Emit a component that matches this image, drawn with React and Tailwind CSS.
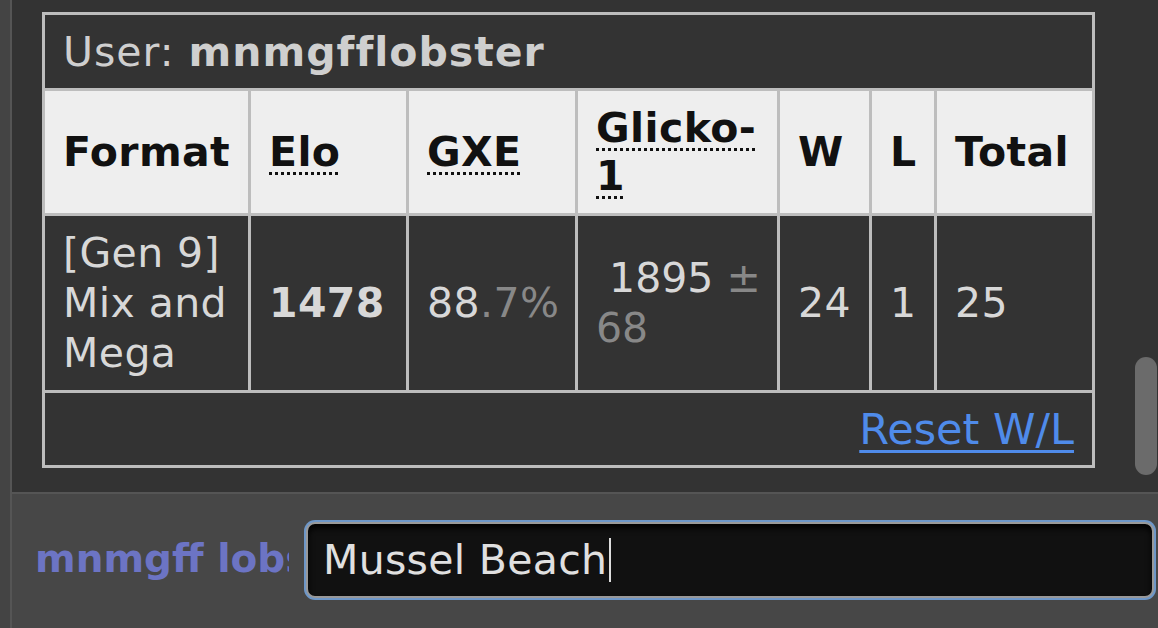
import React from "react";

export default function App() {
  const font = { fontFamily: '"DejaVu Sans", Verdana, sans-serif' };
  const dotted = "underline decoration-dotted decoration-[3px] underline-offset-[6px]";
  const cell = "border-[3px] border-[#bdbdbd] px-[18px]";
  return (
    <div className="w-[1158px] h-[628px] flex bg-[#333] overflow-hidden" style={font}>
      <div className="w-[12px] bg-[#444] border-r-2 border-[#555] shrink-0" />
      <div className="flex-1 flex flex-col min-w-0">
        <div className="relative h-[492px] bg-[#333] pt-[12px] pl-[30px] shrink-0">
          <table className="table-fixed border-collapse w-[1050px] text-[41px] leading-[50px] tracking-[0.4px]">
            <colgroup>
              <col className="w-[206px]" />
              <col className="w-[158px]" />
              <col className="w-[169px]" />
              <col className="w-[202px]" />
              <col className="w-[92px]" />
              <col className="w-[65px]" />
              <col className="w-[158px]" />
            </colgroup>
            <tbody>
              <tr className="h-[76px]">
                <th colSpan={7} className={`${cell} bg-[#333] text-left font-normal text-[#cfcfcf] tracking-[1px]`}>
                  User: <strong className="font-bold">mnmgfflobster</strong>
                </th>
              </tr>
              <tr className="h-[125px] bg-[#eee] text-[#111]">
                <th className={`${cell} text-left font-bold`}>Format</th>
                <th className={`${cell} text-left font-bold`}><abbr className={dotted}>Elo</abbr></th>
                <th className={`${cell} text-left font-bold`}><abbr className={dotted}>GXE</abbr></th>
                <th className={`${cell} text-left font-bold leading-[48px]`}><abbr className={dotted}>Glicko-1</abbr></th>
                <th className={`${cell} text-left font-bold`}>W</th>
                <th className={`${cell} text-left font-bold`}>L</th>
                <th className={`${cell} text-left font-bold`}>Total</th>
              </tr>
              <tr className="h-[177px] text-[#d8d8d8]">
                <td className={`${cell} align-middle`}>[Gen 9] Mix and Mega</td>
                <td className={`${cell} align-middle font-bold`}>1478</td>
                <td className={`${cell} align-middle`}>88<span className="text-[#888]">.7%</span></td>
                <td className="border-[3px] border-[#bdbdbd] pl-[18px] pr-[8px] align-middle tracking-normal">
                  {"\u00a0"}1895<span className="text-[#888]">{"\u00a0±"} 68</span>
                </td>
                <td className={`${cell} align-middle`}>24</td>
                <td className={`${cell} align-middle`}>1</td>
                <td className={`${cell} align-middle`}>25</td>
              </tr>
              <tr className="h-[75px]">
                <td colSpan={7} className={`${cell} text-right align-middle`}>
                  <a className="text-[#4f8bea] text-[43px] tracking-normal underline decoration-[3px] underline-offset-[6px]" href="#">Reset W/L</a>
                </td>
              </tr>
            </tbody>
          </table>
          <div className="absolute right-[1px] top-[357px] w-[22px] h-[118px] rounded-full bg-[#6b6b6b]" />
        </div>
        <div className="h-[2px] bg-[#555] shrink-0" />
        <div className="flex-1 bg-[#474747] flex items-start pt-[28px]">
          <div className="w-[254px] ml-[23px] overflow-hidden whitespace-nowrap text-[39px] font-bold text-[#6c74c4] mt-[12px] leading-[50px]">
            mnmgff lobster
          </div>
          <div className="ml-[17px] w-[848px] h-[76px] rounded-[9px] border-2 border-[#999] bg-[#111] shadow-[0_0_0_2px_#6e97c8,inset_0_4px_6px_#000] flex items-center pl-[15px]">
            <span className="text-[41px] tracking-[0.3px] text-[#e0e0e0] leading-[50px]">Mussel Beach</span>
            <span className="w-[2px] h-[44px] bg-[#ddd] ml-[2px]" />
          </div>
        </div>
      </div>
    </div>
  );
}
